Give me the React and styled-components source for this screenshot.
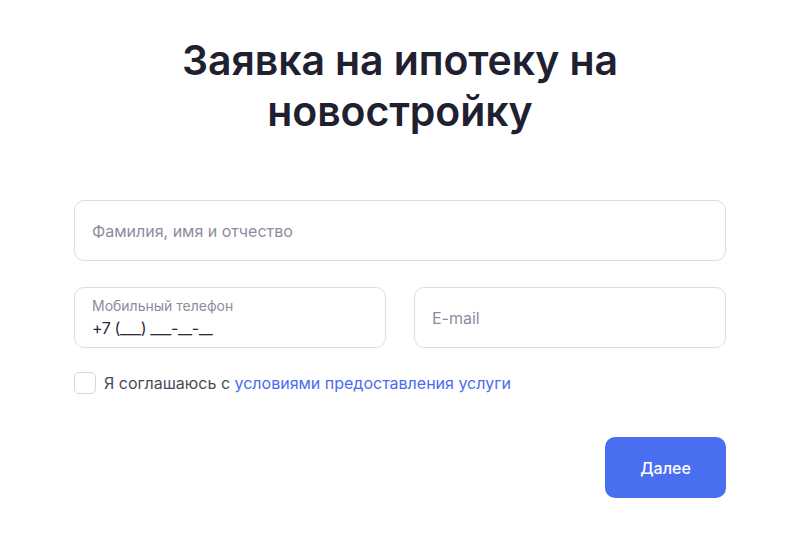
import React from 'react';
import styled, { createGlobalStyle } from 'styled-components';

const GlobalStyle = createGlobalStyle`
  html, body {
    margin: 0;
    padding: 0;
    background: #ffffff;
    font-family: Inter, "Noto Sans", Arial, sans-serif;
  }
`;

function App() {
  return (
    <>
      <GlobalStyle />
      <Page>
        <Title>Заявка на ипотеку на новостройку</Title>
        <Form>
          <Field>
            <Placeholder>Фамилия, имя и отчество</Placeholder>
          </Field>
          <Row>
            <Field>
              <Label>Мобильный телефон</Label>
              <Value>+7 (___) ___-__-__</Value>
            </Field>
            <Field>
              <Placeholder>E-mail</Placeholder>
            </Field>
          </Row>
          <Agree>
            <Checkbox />
            <span>
              Я соглашаюсь с <TermsLink href="#">условиями предоставления услуги</TermsLink>
            </span>
          </Agree>
          <Footer>
            <NextButton type="button">Далее</NextButton>
          </Footer>
        </Form>
      </Page>
    </>
  );
}

const Page = styled.div`
  width: 652px;
  margin: 0 auto;
  padding-top: 35px;
`;

const Title = styled.h1`
  margin: 0 auto;
  width: 470px;
  text-align: center;
  font-size: 41px;
  line-height: 51px;
  font-weight: 600;
  color: #1f2130;
  letter-spacing: -0.1px;
`;

const Form = styled.div`
  margin-top: 63px;
  display: flex;
  flex-direction: column;
`;

const Row = styled.div`
  display: grid;
  grid-template-columns: 1fr 1fr;
  gap: 28px;
  margin-top: 26px;
`;

const Field = styled.div`
  box-sizing: border-box;
  height: 61px;
  border: 1px solid #dcdde8;
  border-radius: 10px;
  padding: 0 17px;
  display: flex;
  flex-direction: column;
  justify-content: center;
  background: #fff;
`;

const Placeholder = styled.div`
  font-size: 16px;
  color: #8b8d9e;
`;

const Label = styled.div`
  font-size: 14px;
  color: #8b8d9e;
  line-height: 17px;
`;

const Value = styled.div`
  font-size: 16px;
  color: #2a2c3a;
  line-height: 20px;
  margin-top: 4px;
  letter-spacing: -0.4px;
`;

const Agree = styled.label`
  display: flex;
  align-items: center;
  gap: 8px;
  margin-top: 24px;
  font-size: 16px;
  color: #4a4c58;
`;

const Checkbox = styled.span`
  box-sizing: border-box;
  width: 22px;
  height: 22px;
  border: 1px solid #d4d6e6;
  border-radius: 5px;
  background: #fff;
`;

const TermsLink = styled.a`
  color: #4a6cf0;
  text-decoration: none;
`;

const Footer = styled.div`
  display: flex;
  justify-content: flex-end;
  margin-top: 43px;
`;

const NextButton = styled.button`
  width: 121px;
  height: 61px;
  border: none;
  border-radius: 10px;
  background: #4a6ef0;
  color: #fff;
  font-family: inherit;
  font-size: 16px;
  font-weight: 500;
  cursor: pointer;
`;

export default App;
